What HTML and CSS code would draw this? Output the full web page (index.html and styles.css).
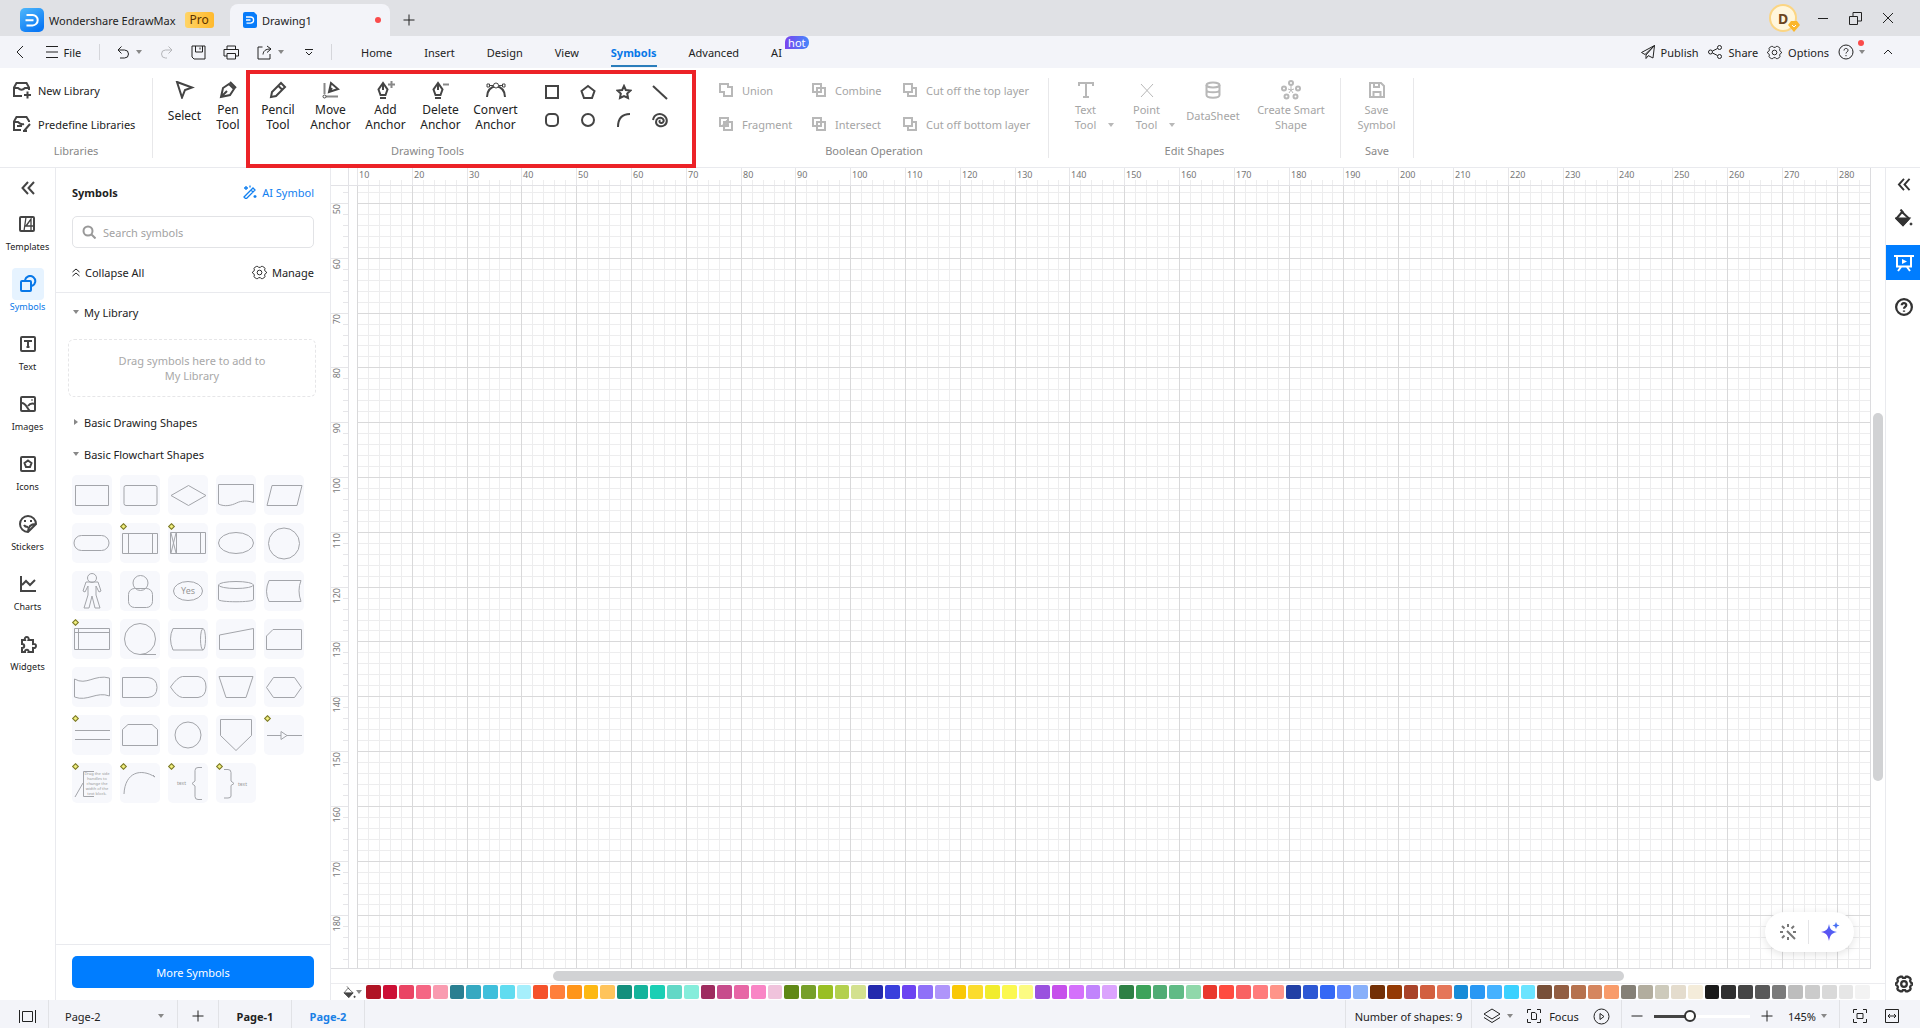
FILE: index.html
```html
<!DOCTYPE html>
<html lang="en">
<head>
<meta charset="utf-8">
<title>Wondershare EdrawMax - Drawing1</title>
<link rel="stylesheet" href="styles.css">
</head>
<body>
<svg class="defs" aria-hidden="true">
  <defs>
    <linearGradient id="logo-fill" x1="0" y1="0" x2="0.6" y2="1"><stop offset="0" stop-color="#4fb8fb"/><stop offset="1" stop-color="#0a78f5"/></linearGradient>
    <linearGradient id="spark-fill" x1="0" y1="1" x2="1" y2="0"><stop offset="0" stop-color="#6a3df0"/><stop offset="1" stop-color="#3f7bf5"/></linearGradient>
    <symbol id="caret" viewBox="0 0 6 4"><path d="M0 0h6L3 4z" fill="currentColor" stroke="none"/></symbol>
    <symbol id="gear" viewBox="0 0 16 16"><path d="M4.800 1.500h1.400L7 2.500h2l.8-1h1.400l2.200 1.300.5 1-.5 1.500.8 1.500 1.300.7v1l-1.300.7-.8 1.500.5 1.500-.5 1-2.200 1.300H9.800l-.8-1H7l-.8 1H4.800l-2.200-1.300-.5-1 .5-1.500-.8-1.500L.5 8.500v-1l1.300-.7.8-1.500-.5-1.500.5-1z"/><circle cx="8" cy="8" r="2.500"/></symbol>
    <symbol id="plus" viewBox="0 0 12 12"><path d="M6 .5v11M.5 6h11"/></symbol>
    <symbol id="help" viewBox="0 0 16 16"><circle cx="8" cy="8" r="7"/><path d="M6 6.500C6 3.800 10 3.800 10 6.300 10 8 8 7.800 8 9.500M8 11v1.200"/></symbol>
    <symbol id="collapse" viewBox="0 0 14 14"><path d="M7 1 1.500 7 7 13M13 1 7.500 7l5.500 6"/></symbol>
    <symbol id="nib" viewBox="0 0 18 18"><path d="M7 2 2.500 8.500 4.500 14h5l2-5.500zM7 2v7M4 17h6" stroke-width="2"/></symbol>
    <symbol id="bucket" viewBox="0 0 18 18"><path d="M7 3 1.500 9.500 8 16l6-6.500z"/><path d="M1.500 9.500H14L8 16z" fill="currentColor"/><path d="m5.500.5 3 3.500"/><circle cx="16" cy="15" r="1" fill="currentColor" stroke-width="1"/></symbol>
  </defs>
</svg>

<header class="titlebar">
  <div class="brand">
    <svg class="logo" viewBox="0 0 24 24"><rect width="24" height="24" rx="5" fill="url(#logo-fill)"/><path d="M6.500 7h6a5.200 5.200 0 0 1 0 10.400h-6M5.500 12.200h8" fill="none" stroke="#fff" stroke-width="2"/></svg>
    <span>Wondershare EdrawMax</span>
    <span class="pro">Pro</span>
  </div>
  <div class="doc-tab">
    <svg width="14" height="16" viewBox="0 0 14 16"><path d="M0 2a2 2 0 0 1 2-2h9l3 3v11a2 2 0 0 1-2 2H2a2 2 0 0 1-2-2z" fill="#087cfa"/><path d="M3 5h4.500a3 3 0 0 1 0 6.200H3.500M3 8h4.500" fill="none" stroke="#fff" stroke-width="1.300"/></svg>
    <span>Drawing1</span><i class="unsaved"></i>
  </div>
  <button class="bare new-tab" aria-label="New tab"><svg width="12" height="12"><use href="#plus"/></svg></button>
  <div class="window-controls">
    <button class="avatar" aria-label="Account">D<svg width="12" height="11" viewBox="0 0 12 11"><path d="M3 0h6l3 4-6 7-6-7z" fill="#fbb62b" stroke="none"/><path d="m4 4 2 2 2-2" stroke="#fff"/></svg></button>
    <button class="bare" aria-label="Minimize"><svg width="12" height="12"><path d="M1 6.500h10"/></svg></button>
    <button class="bare" aria-label="Restore"><svg width="13" height="13"><path d="M.5 4.500h8v8h-8zM4 4V.5h8.500V9H9"/></svg></button>
    <button class="bare" aria-label="Close"><svg width="12" height="12"><path d="m1 1 10 10M11 1 1 11"/></svg></button>
  </div>
</header>

<nav class="menubar">
  <div class="quick">
    <button class="bare back" aria-label="Back"><svg width="8" height="14"><path d="M7 1 1 7l6 6"/></svg></button>
    <button class="bare file"><svg width="12" height="12"><path d="M0 .5h12M0 6h12M0 11.500h12"/></svg>File</button>
    <i class="sep"></i>
    <button class="bare undo" aria-label="Undo"><svg width="13" height="13"><path d="M4.500.5 1 4l3.500 3.500M1 4h6.500a4 4 0 0 1 0 8H3"/></svg><svg class="car"><use href="#caret"/></svg></button>
    <button class="bare faded redo" aria-label="Redo"><svg width="13" height="13"><path d="M8.500.5 12 4 8.500 7.500M12 4H5.500a4 4 0 0 0 0 8H7"/></svg></button>
    <button class="bare" aria-label="Save"><svg width="15" height="15"><path d="M1 1h13v13H3l-2-2zM4.500 1v6h7V1M9 2.500v2"/></svg></button>
    <button class="bare" aria-label="Print"><svg width="16" height="15"><path d="M4 4V1h8.500v3M4 11H1V4.500h14.500V11h-3M4 8.500h8.500V14H4z"/></svg></button>
    <button class="bare" aria-label="Export"><svg width="15" height="15"><path d="M5.500 2H1v12h12V9M10 1l4 3-4 3.500M14 4C8 4 6.500 6 6 9.500"/></svg><svg class="car"><use href="#caret"/></svg></button>
    <button class="bare more" aria-label="More"><svg width="8" height="8"><path d="M0 1.500h8M1 4l3 3 3-3"/></svg></button>
    <i class="sep"></i>
  </div>
  <div class="tabs">
    <a href="#home">Home</a><a href="#insert">Insert</a><a href="#design">Design</a><a href="#view">View</a><a href="#symbols" class="current">Symbols</a><a href="#advanced">Advanced</a><a href="#ai">AI<b class="hot">hot</b></a>
  </div>
  <div class="actions">
    <button class="bare"><svg width="14" height="14"><path d="M13.500.5.5 7.500l3.500 2zM13.500.5 12 13 7 10.500M13.500.5 5 10v3.500l2-2.500"/></svg>Publish</button>
    <button class="bare"><svg width="15" height="14"><circle cx="2.500" cy="7" r="2"/><circle cx="11.500" cy="2.500" r="2"/><circle cx="11.500" cy="11.500" r="2"/><path d="m4.500 6 5-2.500m-5 4.500 5 2.500"/></svg>Share</button>
    <button class="bare"><svg width="15" height="15"><use href="#gear"/></svg>Options</button>
    <button class="bare help" aria-label="Help"><svg width="16" height="16"><use href="#help"/></svg><svg class="car"><use href="#caret"/></svg><i class="dot"></i></button>
    <button class="bare fold" aria-label="Collapse ribbon"><svg width="10" height="6"><path d="m1 5 4-4 4 4"/></svg></button>
  </div>
</nav>

<section class="ribbon">
  <div class="group libraries">
    <div class="stack">
      <button class="row-btn"><svg width="20" height="18"><path d="M17 9V6.500L14.500 2h-10L2 6.500V15h8M2 7h4q3.500 3.500 7 0h4M12 14h7M15.500 10.500v7" stroke-width="2"/></svg>New Library</button>
      <button class="row-btn"><svg width="20" height="18"><path d="M17 7V6L14.500 2h-10L2 6.500V15h7M2 7h4q3 3 6 2M5 11h5M12 16l6-7M11 16h4" stroke-width="2"/></svg>Predefine Libraries</button>
    </div>
    <h2>Libraries</h2>
  </div>
  <div class="group drawing">
    <div class="tools">
      <button class="tool select"><svg width="20" height="18"><path d="m2 1 15 5.500-7 2.500-3 7.500z" stroke-width="2"/></svg>Select</button>
      <button class="tool pen"><svg width="18" height="18"><path d="m2 16 2-9 6-4 5 5-4 6zM2 16l6-6M11 1l6 6" stroke-width="2"/></svg>Pen<br>Tool</button>
      <button class="tool pencil"><svg width="18" height="18"><path d="m2 16 1-5 9-9 4 4-9 9zM9 4.500l4 4" stroke-width="2"/></svg>Pencil<br>Tool</button>
      <button class="tool"><svg width="18" height="18"><path d="M2.500 2v11M4 15.500h12" stroke="#888" stroke-width="2"/><circle cx="2.500" cy="15.500" r="1.500"/><path d="m7 11 2-9 7 6zM7 11l3-4" stroke-width="2"/></svg>Move<br>Anchor</button>
      <button class="tool"><svg width="20" height="18"><use href="#nib" width="18" height="18"/><path d="M12 3.500h7M15.500 0v7" stroke-width="2" stroke="#888"/></svg>Add<br>Anchor</button>
      <button class="tool"><svg width="20" height="18"><use href="#nib" width="18" height="18"/><path d="M12 3.500h6" stroke-width="2" stroke="#888"/></svg>Delete<br>Anchor</button>
      <button class="tool"><svg width="20" height="18"><path d="M1 16C1 9 5 6 10 5M19 16c0-7-4-10-9-11" stroke-width="2"/><path d="M2 4.500h16"/><circle cx="10" cy="4.500" r="2.500" fill="#fff"/><path d="M1 3h2.500v3H1zM16.500 3H19v3h-2.500z" fill="#fff"/></svg>Convert<br>Anchor</button>
      <div class="shape-tools">
        <button class="bare" aria-label="Rectangle"><svg width="16" height="16"><path d="M2 2h12v12H2z"/></svg></button>
        <button class="bare" aria-label="Pentagon"><svg width="16" height="16"><path d="m8 2 6.500 5L12 14H4L1.500 7z"/></svg></button>
        <button class="bare" aria-label="Star"><svg width="16" height="16"><path d="m8 2 1.800 4 4.700.5-3.300 3 .8 4.500L8 12l-4 2 .8-4.500-3.300-3L6.200 6z"/></svg></button>
        <button class="bare" aria-label="Line"><svg width="16" height="16"><path d="m1 2 14 13"/></svg></button>
        <button class="bare" aria-label="Rounded rectangle"><svg width="16" height="16"><rect x="2" y="2" width="12" height="12" rx="4"/></svg></button>
        <button class="bare" aria-label="Ellipse"><svg width="16" height="16"><circle cx="8" cy="8" r="6"/></svg></button>
        <button class="bare" aria-label="Arc"><svg width="16" height="16"><path d="M2 15C2 7 5 2 14 2"/></svg></button>
        <button class="bare" aria-label="Spiral"><svg width="16" height="16"><path d="M1 8C2 2 8 .5 12 3.500s3.500 8 0 10S4 13.500 4 10s4-5.500 6.500-3.500.5 5-1.500 4.500-2-2.500-.5-2.500"/></svg></button>
      </div>
    </div>
    <h2>Drawing Tools</h2>
    <i class="callout"></i>
  </div>
  <div class="group boolean disabled">
    <div class="bool-grid">
      <button class="row-btn" disabled><svg width="16" height="16"><path d="M2 2h8v3h4v9H6v-4H2z"/></svg>Union</button>
      <button class="row-btn" disabled><svg width="16" height="16"><path d="M2 2h8v8H2zM6 6h8v8H6z"/></svg>Combine</button>
      <button class="row-btn" disabled><svg width="16" height="16"><path d="M2 2h8v8H2zM10 6h4v8H6v-4"/></svg>Cut off the top layer</button>
      <button class="row-btn" disabled><svg width="16" height="16"><path d="M2 2h8v8H2zM6 6h8v8H6zM5 9l5-5M6 11l5-5"/></svg>Fragment</button>
      <button class="row-btn" disabled><svg width="16" height="16"><path d="M2 2h8v8H2zM6 6h8v8H6z"/></svg>Intersect</button>
      <button class="row-btn" disabled><svg width="16" height="16"><path d="M2 2h8v8H2zM10 6h4v8H6v-4"/></svg>Cut off bottom layer</button>
    </div>
    <h2>Boolean Operation</h2>
  </div>
  <div class="group edit disabled">
    <div class="tools">
      <button class="tool" disabled><svg width="18" height="18"><path d="M2 5V2h14v3M9 2v14M6 16h6" stroke-width="2"/></svg>Text<br>Tool<svg class="car"><use href="#caret"/></svg></button>
      <button class="tool" disabled><svg width="18" height="18"><path d="m3 3 12 13M15 3 3 16"/></svg>Point<br>Tool<svg class="car"><use href="#caret"/></svg></button>
      <button class="tool" disabled><svg width="18" height="18"><ellipse cx="9" cy="4" rx="6.500" ry="2.500" stroke-width="2"/><path d="M2.500 4v10c0 3.500 13 3.500 13 0V4M2.500 9c0 3 13 3 13 0" stroke-width="2"/></svg>DataSheet</button>
      <button class="tool smart" disabled><svg width="20" height="20"><g stroke-width="2"><circle cx="10" cy="3" r="2"/><circle cx="3" cy="8.500" r="2"/><circle cx="17" cy="8.500" r="2"/><circle cx="5.500" cy="16.500" r="2"/><circle cx="14.500" cy="16.500" r="2"/></g><path d="M10 6v4M7 9l3 1 3-1M8 13l2-3 2 3"/></svg>Create Smart<br>Shape</button>
    </div>
    <h2>Edit Shapes</h2>
  </div>
  <div class="group save disabled">
    <div class="tools"><button class="tool" disabled><svg width="18" height="18"><path d="M2 2h11l3 3v11H2zM6 2v4h5V2M5.500 16v-5h7v5" stroke-width="2"/></svg>Save<br>Symbol</button></div>
    <h2>Save</h2>
  </div>
</section>

<main class="workspace">
  <nav class="side-nav">
    <button class="bare fold-nav" aria-label="Collapse"><svg width="14" height="14"><use href="#collapse"/></svg></button>
    <button><span><svg width="18" height="18"><rect x="2" y="2" width="14" height="14" rx="1"/><path d="M8 2 6 16M7 11h9M8 11l5-7v12" stroke-width="1.300"/></svg></span>Templates</button>
    <button class="current"><span><svg width="18" height="18"><rect x="2" y="6" width="10" height="10" rx="1"/><path d="M6 5a5.200 5.200 0 1 1 7 6"/></svg></span>Symbols</button>
    <button><span><svg width="18" height="18"><rect x="2" y="2" width="14" height="14" rx="1"/><path d="M6 7V6h6v1M9 6v6M7.500 12h3"/></svg></span>Text</button>
    <button><span><svg width="18" height="18"><rect x="2" y="2" width="14" height="14" rx="1"/><path d="M2 8c5-1 6 6 9 8M9 11c2-3 4-3 7-2M12.500 5h1"/></svg></span>Images</button>
    <button><span><svg width="18" height="18"><rect x="2" y="2" width="14" height="14" rx="1"/><path d="m9 5.500 3.500 2.500-1.500 4H7L5.500 8z"/></svg></span>Icons</button>
    <button><span><svg width="20" height="20"><path d="M18 10a8 8 0 1 0-8 8zM18 10c-5 0-8 3-8 8M7 6v2M13 6v2M6 11c1 2 3 2 4 2"/></svg></span>Stickers</button>
    <button><span><svg width="18" height="18"><path d="M2 1v15h15M3 10l4-4 4 4 5-5"/></svg></span>Charts</button>
    <button><span><svg width="18" height="18"><path d="M3 5h3C4.500 1 11 1 9.500 5H14v4c4-1 4 5 0 4v4H9.500c1-3-4-3-3.500 0H3v-4c3 0 3-4 0-4z"/></svg></span>Widgets</button>
  </nav>

  <aside class="panel">
    <div class="panel-head"><h1>Symbols</h1><a href="#ai-symbol"><svg width="14" height="14"><path d="m1 12 9-9 2 2-9 9zM8 5l2 2M3 1v4M1 3h4M12 10v3M10.500 11.500h3M7 .5v2" stroke-width="1.300"/></svg>AI Symbol</a></div>
    <label class="search"><svg width="14" height="14"><circle cx="6" cy="6" r="4.500"/><path d="m9.500 9.500 4 4"/></svg><input type="text" placeholder="Search symbols" aria-label="Search symbols"></label>
    <div class="panel-tools">
      <button class="bare"><svg width="8" height="9"><path d="m.5 4 3.500-3 3.500 3M.5 8 4 5l3.500 3"/></svg>Collapse All</button>
      <button class="bare"><svg width="15" height="15"><use href="#gear"/></svg>Manage</button>
    </div>
    <div class="lists">
      <button class="section first"><svg class="car"><use href="#caret"/></svg>My Library</button>
      <p class="drop">Drag symbols here to add to<br>My Library</p>
      <button class="section"><svg class="car closed"><use href="#caret"/></svg>Basic Drawing Shapes</button>
      <button class="section"><svg class="car"><use href="#caret"/></svg>Basic Flowchart Shapes</button>
      <div class="tiles" id="tiles"></div>
    </div>
    <div class="panel-foot"><button class="primary">More Symbols</button></div>
  </aside>

  <section class="stage">
    <div class="board" id="board"><svg id="sheet"></svg>
      <div class="assist"><button class="bare" aria-label="Effects"><svg width="18" height="18"><path d="M9 1v3M9 14v3M1 9h3M14 9h3M3 3l2.500 2.500M15 3l-2.500 2.500M3 15l2.500-2.500M8 8l8 8"/></svg></button><i></i><button class="bare" aria-label="AI"><svg width="20" height="20"><path d="M9 2c1 5 2 7 8 8-6 1-7 4-8 9-1-5-2-8-8-9 6-1 7-3 8-8zM16 0l1 2.500 2.500 1L17 4.500 16 7l-1-2.500-2.500-1 2.500-1z" fill="url(#spark-fill)" stroke="none"/></svg></button></div>
    </div>
    <div class="vscroll"><i></i></div>
    <div class="hscroll"><i></i></div>
    <div class="palette"><button class="bare" aria-label="Fill"><svg width="13" height="13"><use href="#bucket"/></svg><svg class="car"><use href="#caret"/></svg></button><div class="swatches" id="swatches"></div></div>
  </section>

  <aside class="right-bar">
    <button class="bare" aria-label="Expand"><svg width="14" height="13"><use href="#collapse"/></svg></button>
    <button class="bare" aria-label="Fill"><svg width="18" height="18"><use href="#bucket"/></svg></button>
    <button class="bare active" aria-label="Presentation"><svg width="20" height="18"><path d="M0 2h20M3 2v10.500h14V2M7 13l-3 4M13 13l3 4"/><path d="m8 5 5 2.500L8 10z" fill="#fff" stroke="none"/></svg></button>
    <button class="bare" aria-label="Help"><svg width="18" height="18"><use href="#help"/></svg></button>
    <button class="bare settings" aria-label="Settings"><svg width="18" height="18"><use href="#gear"/></svg></button>
  </aside>
</main>

<footer class="status">
  <button class="bare cell pages" aria-label="Page list"><svg width="17" height="13"><path d="M.5 0v13M16.500 0v13M3.500 1.500h10v10h-10z"/></svg></button>
  <div class="cell picker"><select aria-label="Page"><option>Page-2</option><option>Page-1</option></select><svg class="car"><use href="#caret"/></svg></div>
  <button class="bare cell add" aria-label="Add page"><svg width="12" height="12"><use href="#plus"/></svg></button>
  <a class="cell page" href="#page-1">Page-1</a>
  <a class="cell page current" href="#page-2">Page-2</a>
  <div class="status-right">
    <span class="cell count">Number of shapes: 9</span>
    <div class="cell modes">
      <button class="bare" aria-label="Layers"><svg width="18" height="16"><path d="m9 1 8 5-8 5-8-5zM1 9.500l8 5 8-5"/></svg><svg class="car"><use href="#caret"/></svg></button>
      <button class="bare focus"><svg width="14" height="14"><path d="M4 .5H.5V4M10 .5h3.500V4M4 13.500H.5V10M10 13.500h3.500V10M4.500 3.500H8L9.500 5v5.500h-5z"/></svg>Focus</button>
      <button class="bare" aria-label="Play"><svg width="17" height="17"><circle cx="8.500" cy="8.500" r="7.500"/><path d="M7 5.500v6l4-3z"/></svg></button>
    </div>
    <div class="cell zoom">
      <button class="bare" aria-label="Zoom out"><svg width="12" height="12"><path d="M.5 6h11"/></svg></button>
      <input type="range" min="0" max="100" value="36" aria-label="Zoom">
      <button class="bare" aria-label="Zoom in"><svg width="12" height="12"><use href="#plus"/></svg></button>
      <button class="bare level">145%<svg class="car"><use href="#caret"/></svg></button>
    </div>
    <div class="fits">
      <button class="bare" aria-label="Fit page"><svg width="14" height="14"><path d="M4 .5H.5V4M10 .5h3.500V4M4 13.500H.5V10M10 13.500h3.500V10M4 4.500h6v5H4z"/></svg></button>
      <button class="bare" aria-label="Fit width"><svg width="14" height="14"><path d="M.5.5h13v13H.5zM3 7h8M5 5 3 7l2 2M9 5l2 2-2 2"/></svg></button>
    </div>
  </div>
</footer>
<script src="app.js"></script>
</body>
</html>
```
FILE: styles.css
```css
* { box-sizing: border-box; }
html, body { height: 100%; }
body {
  margin: 0;
  display: flex;
  flex-direction: column;
  overflow: hidden;
  background: #fff;
  color: #222;
  font: 11px/15px "Noto Sans", "Open Sans", sans-serif;
}
h1, h2, p { margin: 0; font-size: inherit; }
button, input, select { font: inherit; color: inherit; }
button { border: 0; background: none; padding: 0; }
a { color: inherit; text-decoration: none; }
svg { fill: none; stroke: currentColor; flex: none; display: block; }
.defs { position: absolute; width: 0; height: 0; }
.bare { display: inline-flex; align-items: center; justify-content: center; gap: 6px; }
.car { width: 6px; height: 4px; color: #888; }

.titlebar { height: 36px; background: #e0e1e5; display: flex; align-items: center; }
.brand { width: 230px; padding: 4px 0 0 20px; display: flex; align-items: center; gap: 5px; white-space: nowrap; }
.logo { width: 24px; height: 24px; stroke: none; }
.pro { margin-left: 4px; padding: 0 5px; border-radius: 3px; background: linear-gradient(90deg, #ffd466, #ffb92d); color: #5c3300; font-size: 12px; line-height: 16px; }
.doc-tab { width: 160px; height: 32px; align-self: flex-end; padding: 0 9px 0 13px; display: flex; align-items: center; gap: 5px; background: #f3f4f9; border-radius: 8px 8px 0 0; margin-right: 13px; }
.doc-tab svg { stroke: none; }
.new-tab { padding-top: 3px; }
.unsaved { width: 6px; height: 6px; border-radius: 3px; background: #fa4b4b; margin-left: auto; }
.window-controls { margin-left: auto; padding-right: 26px; display: flex; align-items: center; gap: 20px; }
.avatar { position: relative; width: 28px; height: 28px; border-radius: 14px; border: 2px solid #fbd583; background: #fff6dc; color: #6b4420; font-weight: 700; font-size: 14px; }
.avatar svg { position: absolute; right: -5px; bottom: -2px; }

.menubar { height: 32px; background: #f3f4f9; display: flex; align-items: center; color: #222; }
.quick { width: 332px; display: flex; align-items: center; justify-content: space-between; padding-left: 16px; }
.file { padding-left: 4px; }
.more { padding-left: 4px; }
.sep { width: 1px; height: 16px; background: #d5d6db; }
.faded { color: #b5b6ba; }
.tabs { display: flex; gap: 32px; padding-left: 29px; align-self: stretch; }
.tabs a { position: relative; line-height: 33px; }
.tabs .current { color: #0878e8; font-weight: 700; border-bottom: 2px solid #2a7dbb; height: 31px; }
.hot { position: absolute; left: 14px; top: 0; padding: 0 3px; border-radius: 6px 6px 6px 0; background: linear-gradient(90deg, #7a45ee, #4787fb); color: #fff; font-weight: 400; line-height: 13px; }
.actions { margin-left: auto; display: flex; align-items: center; gap: 9px; padding-right: 27px; }
.help { position: relative; gap: 5px; }
.dot { position: absolute; right: 1px; top: -4px; width: 6px; height: 6px; border-radius: 3px; background: #fa4b4b; }
.fold { margin-left: 9px; }

.ribbon { height: 100px; display: flex; border-bottom: 1px solid #e9eaee; color: #222; padding-top: 10px; }
.group { position: relative; height: 80px; border-right: 1px solid #e8e8ea; display: flex; flex-direction: column; justify-content: space-between; }
.group svg { color: #444; }
.group h2 { color: #888; font-weight: 400; text-align: center; line-height: 14px; }
.libraries { width: 153px; padding-left: 12px; }
.libraries h2 { padding-right: 12px; }
.stack { display: grid; gap: 10px; }
.row-btn { display: flex; align-items: center; gap: 6px; height: 24px; white-space: nowrap; }
.drawing { width: 549px; border-right: 0; }
.tools { display: flex; padding-left: 8px; }
.tool { width: 55px; height: 55px; position: relative; display: flex; flex-direction: column; align-items: center; padding-top: 3px; line-height: 15px; }
.drawing .tool { font-size: 12px; }
.tool > svg:first-child { margin-bottom: 3px; }
.drawing .select { width: 47px; }
.drawing .pen { width: 40px; margin-right: 5px; }
.drawing .pencil { width: 50px; }
.select > svg:first-child, .tool:nth-child(3):disabled > svg:first-child { margin-bottom: 9px; }
.tool .car { position: absolute; right: 2px; bottom: 6px; }
.shape-tools { display: grid; grid-template-columns: repeat(4, 36px); grid-template-rows: 28px 28px; margin-left: 11px; }
.shape-tools svg { stroke-width: 2; }
.callout { position: absolute; left: 93px; top: -8px; width: 450px; height: 98px; border: 4px solid #ec2227; z-index: 2; }
.boolean { width: 347px; padding-left: 16px; }
.boolean h2 { padding-right: 18px; }
.bool-grid { display: grid; grid-template-columns: 93px 91px auto; row-gap: 10px; }
.bool-grid .row-btn { gap: 8px; }
.bool-grid svg { stroke-width: 2; }
.disabled button { color: #a5a5a5; }
.disabled button svg { color: #b8b8b8; }
.edit { width: 292px; }
.edit .tools { padding-left: 6px; }
.edit .tool { width: 61px; }
.edit .tool:nth-child(3) { width: 72px; }
.edit .smart { width: 84px; padding-top: 2px; white-space: nowrap; }
.edit .smart > svg:first-child { margin-bottom: 2px; }
.save { width: 73px; }

.workspace { flex: 1; min-height: 0; display: flex; }
.side-nav { width: 56px; border-right: 1px solid #e9eaee; display: flex; flex-direction: column; align-items: center; }
.side-nav .fold-nav { height: 40px; }
.side-nav button { height: 60px; display: flex; flex-direction: column; align-items: center; font-size: 9px; line-height: 14px; color: #222; }
.side-nav button svg { color: #444; stroke-width: 2; }
.side-nav button span { width: 32px; height: 32px; border-radius: 4px; display: grid; place-items: center; }
.side-nav .current, .side-nav .current svg { color: #0878e8; }
.side-nav .current span { background: #e6f3ff; }

.panel { width: 275px; border-right: 1px solid #e9eaee; display: flex; flex-direction: column; }
.panel-head { display: flex; justify-content: space-between; padding: 17px 16px 16px; }
.panel-head a { display: flex; gap: 5px; color: #1280f0; }
.search { margin: 0 16px; height: 32px; border: 1px solid #e2e3e6; border-radius: 5px; display: flex; align-items: center; gap: 7px; padding-left: 9px; color: #999; }
.search svg { stroke-width: 2; }
.search input { border: 0; outline: 0; background: none; flex: 1; min-width: 0; padding: 0; }
.search input::placeholder { color: #a2a2a2; }
.panel-tools { display: flex; justify-content: space-between; padding: 16px 16px 12px; border-bottom: 1px solid #e9eaee; }
.panel-tools .bare { gap: 5px; height: 16px; }
.lists { flex: 1; min-height: 0; overflow: hidden; }
.section { display: flex; align-items: center; gap: 5px; height: 32px; padding-left: 17px; }
.section.first { height: 38px; }
.closed { transform: rotate(-90deg); }
.drop { margin: 8px 14px 9px 12px; height: 58px; border: 1px dashed #e6e6e8; border-radius: 6px; color: #a8a8a8; text-align: center; padding-top: 13px; }
.tiles { display: grid; grid-template-columns: repeat(5, 40px); gap: 8px; padding: 5px 16px; }
.tile { position: relative; width: 40px; height: 40px; border-radius: 5px; background: #f7f8fc; color: #a3a5aa; }
.tile text { fill: #999; stroke: none; }
.tile i { position: absolute; left: 1px; top: 1px; width: 5px; height: 5px; border: 1px solid #77752c; background: #f1ef7c; transform: rotate(45deg); }
.panel-foot { border-top: 1px solid #e9eaee; padding: 11px 16px 12px; }
.primary { width: 100%; height: 32px; border-radius: 5px; background: #007dff; color: #fff; }

.stage { flex: 1; min-width: 0; display: grid; grid-template: minmax(0, 1fr) 14px 17px / minmax(0, 1fr) 14px; }
.board { position: relative; overflow: hidden; }
#sheet { width: 100%; height: 100%; stroke: none; shape-rendering: crispEdges; }
#sheet text { font-size: 9px; fill: #777; }
.assist { position: absolute; right: 17px; bottom: 17px; width: 89px; height: 40px; border-radius: 20px; background: #fff; box-shadow: 0 2px 8px rgba(0, 0, 0, .12); display: flex; align-items: center; justify-content: center; gap: 11px; color: #777; }
.assist svg { stroke-width: 2; }
.assist > i { width: 1px; height: 24px; background: #e4e4e6; }
.vscroll { padding: 245px 2px 0; }
.vscroll i { display: block; width: 10px; height: 368px; border-radius: 5px; background: #d1d2d4; }
.hscroll { grid-column: 1 / -1; padding: 2px 261px 0 222px; }
.hscroll i { display: block; height: 10px; border-radius: 5px; background: #d1d2d4; }
.palette { grid-column: 1 / -1; display: flex; align-items: center; border-top: 1px solid #ececef; padding: 0 15px 0 12px; gap: 4px; }
.palette .bare { gap: 0; color: #444; }
.swatches { flex: 1; display: flex; gap: 2px; }
.swatches i { flex: 1; height: 14px; border-radius: 2px; }

.right-bar { width: 35px; border-left: 1px solid #e9eaee; display: flex; flex-direction: column; color: #333; }
.right-bar button { height: 35px; margin-bottom: 9px; padding-left: 1px; }
.right-bar button:nth-child(-n+2) { height: 33px; margin-bottom: 0; }
.right-bar button:nth-child(2) { margin-bottom: 11px; }
.right-bar svg { stroke-width: 2; }
.right-bar .active { background: #007dff; color: #fff; }
.right-bar .settings { margin: auto 0 0; height: 32px; }

.status { height: 28px; background: #f3f4f9; display: flex; }
.cell { border-right: 1px solid #e1e2e6; display: flex; align-items: center; height: 28px; padding-top: 4px; }
.pages { width: 49px; padding-left: 7px; }
.picker { width: 129px; padding-left: 16px; padding-right: 13px; }
.picker select { appearance: none; border: 0; outline: 0; background: none; flex: 1; padding: 0; }
.add { width: 41px; }
.page { width: 73px; justify-content: center; font-weight: 700; }
.page.current { color: #1a80e6; }
.status-right { margin-left: auto; display: flex; }
.count { width: 127px; border-left: 1px solid #e1e2e6; justify-content: center; white-space: nowrap; }
.modes { width: 150px; padding-left: 11px; padding-right: 11px; justify-content: space-between; }
.modes .focus { gap: 8px; }
.zoom { width: 218px; padding-left: 9px; padding-right: 12px; justify-content: space-between; }
.zoom .level { gap: 5px; padding-left: 4px; }
.zoom input { appearance: none; width: 96px; height: 14px; margin: 0; background: linear-gradient(90deg, #444 36%, #fff 36%) center / 100% 3px no-repeat; }
.zoom input::-webkit-slider-thumb { appearance: none; width: 12px; height: 12px; border-radius: 6px; border: 2px solid #333; background: #fff; }
.fits { display: flex; align-items: center; gap: 18px; padding: 4px 21px 0 13px; }
```
FILE: app.js
```js
// Flowchart library thumbnails, drawn in a 40 x 40 box. A leading "*" marks a shape with a handle.
const shapes = [
  '<path d="M3.500 10.500h33v20h-33z"/>',
  '<rect x="4" y="10.500" width="33" height="20" rx="2"/>',
  '<path d="m3 20.500 17.500-10 17.500 10-17.500 10z"/>',
  '<path d="M2.500 9.500h35v18c-6-2-12-2-17 .500s-12 4-18 1z"/>',
  '<path d="M8 10.500h30l-5 20H3z"/>',
  '<rect x="2" y="12.500" width="35" height="15" rx="7.500"/>',
  '*<path d="M2.500 10.500h35v20h-35zM8.500 10.500v20M32.500 10.500v20"/>',
  '*<path d="M2.500 9.500h35v21h-35zM8.500 9.500v21M32.500 9.500v21M3 10l5 20M8 10 3 30"/>',
  '<ellipse cx="20" cy="20" rx="17.500" ry="10.500"/>',
  '<circle cx="20" cy="20.500" r="15.500"/>',
  '<circle cx="20" cy="7" r="4.500"/><path d="M14 11h12l3 9-2 1-3-6v9l4 13h-5l-3-12-3 12h-5l4-13v-9l-3 6-2-1z"/>',
  '<circle cx="20.500" cy="12" r="7.500"/><rect x="8.500" y="17.500" width="24" height="19" rx="6"/>',
  '<ellipse cx="20" cy="20" rx="14.500" ry="9.500"/><text x="20" y="23" font-size="9" text-anchor="middle">Yes</text>',
  '<ellipse cx="20" cy="14" rx="17.500" ry="3.500"/><path d="M2.500 14v14.500c0 3 35 3 35 0V14"/>',
  '<path d="M5 9.500h32q-4 10 0 21H5q-5-10 0-21z"/>',
  '*<path d="M2.500 9.500h35v21h-35zM2.500 13.500h35M6.500 9.500v21"/>',
  '<circle cx="20" cy="20" r="15.500"/><path d="M20 35.500h16"/>',
  '<path d="M35 9.500H5q-5 10 0 21.500h30"/><ellipse cx="35" cy="20.300" rx="2.500" ry="10.700"/>',
  '<path d="m3.500 16 34-6.500v21h-34z"/>',
  '<path d="M9 10.500h28.500v20h-35V17z"/>',
  '<path d="M2.500 12c12 7 20-5 35-1v18c-13-5-22 6-35 1z"/>',
  '<path d="M2.500 10.500H28q9 1 9 10t-9 10H2.500z"/>',
  '<path d="M2.500 20q7-10 12-10.500H30q8 1 8 10.500t-8 10.500H14.500Q9 30 2.500 20z"/>',
  '<path d="M3 9.500h34l-7 21H10z"/>',
  '<path d="M9.500 10.500h21l7 10-7 10h-21l-7-10z"/>',
  '*<path d="M3 15.500h35M3 24.500h35"/>',
  '<path d="M8 9.500h24l5.500 5v16h-35v-16z"/>',
  '<circle cx="20" cy="20" r="13"/>',
  '<path d="M4.500 4.500h31v16l-15.500 15-15.500-15z"/>',
  '*<path d="M3 20.500h14M23 20.500h15M17 16.500l6 4-6 4z"/>',
  '*<path d="M22 8.500H11.500v25H22M3 34l8-14"/><g font-size="4" text-anchor="middle"><text x="25" y="12">Drag the side</text><text x="25" y="17">handles to</text><text x="25" y="22">change the</text><text x="25" y="27">width of the</text><text x="25" y="32">text block.</text></g>',
  '*<path d="M4 31c1-22 17-26 31-17l-2-2"/>',
  '*<path d="M34 4.500h-4q-3 0-3 3V18l-3 2.500 3 2.500v10.500q0 3 3 3h4"/><text x="9" y="22" font-size="5">text</text>',
  '*<path d="M8 6.500h4q3 0 3 3V18l3 2.500-3 2v10.500q0 2-3 2H8"/><text x="22" y="23" font-size="5">text</text>'
];
document.getElementById('tiles').innerHTML = shapes.map(s => {
  const handle = s[0] === '*';
  return `<div class="tile"><svg width="40" height="40">${handle ? s.slice(1) : s}</svg>${handle ? '<i></i>' : ''}</div>`;
}).join('');

// Quick colour palette, five shades to a family.
const colors = `b01424 cc0f35 ea4463 f56684 f99bb0 2a7f91 36a9c1 3fbfdb 60dcf0 a6effc
f5522b ff7f3b ff9519 fdb813 ffc45c 138f7c 15b49b 1acfb4 62d8c6 85eddb
9e2b5f c74c8c e766a5 f985c5 f0c3dc 5f8815 769f29 99bf23 b3d04e d3e18f
2329ad 393fdc 6c43f1 8f70f8 af95fa f9c806 fbdc2e f1ec2d fbf850 fcfb82
9a51df c650eb d470fb c184fc dba3fd 2e8044 3da35a 50ac74 60bb85 90d8aa
e9382c ff4b3f f96262 ff7c7c ff9489 2240a5 2d58d4 3468f5 668dff 88b0fa
733006 943a04 a94329 d25f3f e57659 188cd8 2998f4 45b2ff 3bd1ff 6ae4ff
785038 925e42 b6724e d5865f f89b6a 858076 b2ad9e cdcabb e4dccd f4ecda
1a1a1a 303030 454545 595959 7b7b7b bdbdbd cbcbcb d9d9d9 e6e6e6 f3f3f3`.split(/\s+/);
document.getElementById('swatches').innerHTML = colors.map(c => `<i style="background:#${c}"></i>`).join('');

// Rulers and page grid at 145% zoom; one minor cell is 2 mm.
const board = document.getElementById('board');
const sheet = document.getElementById('sheet');
function drawSheet() {
  const w = board.clientWidth, h = board.clientHeight;
  const minor = 2 * 96 / 25.4 * 1.45;
  const left = 26, ruler = 17, firstX = 26, firstY = 35;
  const out = [];
  const rect = (x, y, rw, rh, c) => out.push(`<rect x="${x}" y="${y}" width="${rw}" height="${rh}" fill="${c}"/>`);
  const visitX = fn => { for (let i = 0; firstX + i * minor < w; i++) fn(Math.round(firstX + i * minor), i); };
  const visitY = fn => { for (let i = -1; firstY + i * minor < h; i++) fn(Math.round(firstY + i * minor), i); };
  visitX((x, i) => { if (i % 5) rect(x, ruler - 5, 1, h, '#ededee'); });
  visitY((y, i) => { if (i % 5) { rect(left, y, w, 1, '#ededee'); rect(ruler - 5, y, 5, 1, '#e6e6e9'); } });
  visitX((x, i) => {
    if (i % 5) return;
    rect(x, 0, 1, ruler, '#e6e6e9');
    rect(x, ruler, 1, h, '#d9d9da');
    out.push(`<text x="${x + 2}" y="10">${10 + i * 2}</text>`);
  });
  visitY((y, i) => {
    if (i % 5) return;
    rect(0, y, ruler, 1, '#e6e6e9');
    rect(left, y, w, 1, '#d9d9da');
    out.push(`<text transform="translate(9 ${y + 1}) rotate(-90)" text-anchor="end">${50 + i * 2}</text>`);
  });
  rect(0, ruler, w, 1, '#e2e2e6');
  rect(ruler, 0, 1, h, '#e2e2e6');
  rect(w - 1, 0, 1, h, '#dcdcdf');
  rect(0, h - 1, w, 1, '#dcdcdf');
  sheet.innerHTML = out.join('');
}
drawSheet();
addEventListener('resize', drawSheet);
```
